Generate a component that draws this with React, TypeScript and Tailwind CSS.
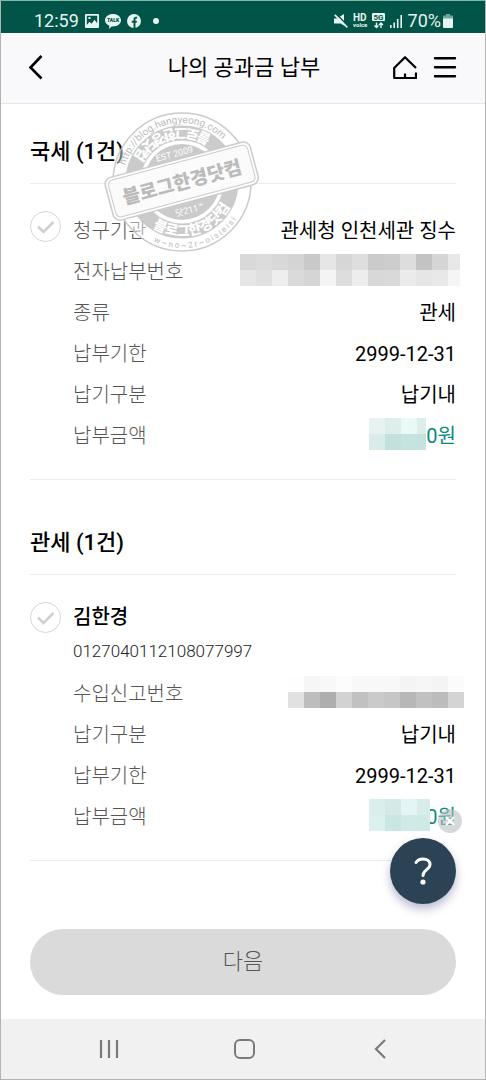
import type { ReactNode } from 'react';
import clsx from 'clsx';

type Cell = { w?: string; c: string };

type Row = {
  label: string;
  value: ReactNode;
};

const grayTop: Cell[] = [
  { c: 'bg-[#d9d9d9]' },
  { c: 'bg-[#dcdcdc]' },
  { c: 'bg-[#d8d8d8]' },
  { c: 'bg-[#d4d4d4]' },
  { c: 'bg-[#c9c9c9]' },
  { c: 'bg-[#e6e6e6]' },
  { c: 'bg-[#d6d6d6]' },
  { c: 'bg-[#dedede]' },
  { c: 'bg-[#cbcbcb]' },
  { c: 'bg-[#cdcdcd]' },
  { c: 'bg-[#dddddd]' },
  { c: 'bg-[#c3c3c3]' },
  { c: 'bg-[#d5d5d5]' },
  { c: 'bg-[#e8e8e8]', w: 'w-3' },
];

const grayBottom: Cell[] = [
  { c: 'bg-[#e6e6e6]' },
  { c: 'bg-[#e0e0e0]' },
  { c: 'bg-[#eeeeee]' },
  { c: 'bg-[#dadada]' },
  { c: 'bg-[#d5d5d5]' },
  { c: 'bg-[#f4f4f4]' },
  { c: 'bg-[#dddddd]' },
  { c: 'bg-[#ededed]' },
  { c: 'bg-[#d8d8d8]' },
  { c: 'bg-[#d9d9d9]' },
  { c: 'bg-[#ebebeb]' },
  { c: 'bg-[#e6e6e6]' },
  { c: 'bg-[#e8e8e8]' },
  { c: 'bg-[#f5f5f5]', w: 'w-3' },
];

const faintTop: Cell[] = [
  { c: 'bg-[#fefefe]' },
  { c: 'bg-[#f6f6f6]' },
  { c: 'bg-[#f8f8f8]' },
  { c: 'bg-[#fcfcfc]' },
  { c: 'bg-[#f8f8f8]' },
  { c: 'bg-[#f8f8f8]' },
  { c: 'bg-[#f8f8f8]' },
  { c: 'bg-[#f4f4f4]' },
  { c: 'bg-[#f6f6f6]' },
  { c: 'bg-[#f4f4f4]' },
  { c: 'bg-[#fbfbfb]' },
];

const darkBottom: Cell[] = [
  { c: 'bg-[#e1e1e1]' },
  { c: 'bg-[#bdbdbd]' },
  { c: 'bg-[#aeaeae]' },
  { c: 'bg-[#d2d2d2]' },
  { c: 'bg-[#c1c1c1]' },
  { c: 'bg-[#cacaca]' },
  { c: 'bg-[#c6c6c6]' },
  { c: 'bg-[#b7b7b7]' },
  { c: 'bg-[#c1c1c1]' },
  { c: 'bg-[#bcbcbc]' },
  { c: 'bg-[#d4d4d4]' },
];

const tealA: Cell[][] = [
  [{ c: 'bg-[#e8f3f1]' }, { c: 'bg-[#ddeeeb]' }, { c: 'bg-[#ebf8f8]' }, { c: 'bg-[#ddedea]', w: 'w-[9px]' }],
  [{ c: 'bg-[#daecea]' }, { c: 'bg-[#c2e0dd]' }, { c: 'bg-[#c7e3df]' }, { c: 'bg-[#c4e2de]', w: 'w-[9px]' }],
];

const tealB: Cell[][] = [
  [{ c: 'bg-[#daeeeb]' }, { c: 'bg-[#d3eae7]' }, { c: 'bg-[#e3f5f4]' }, { c: 'bg-[#d8ecea]', w: 'w-[13px]' }],
  [{ c: 'bg-[#dcf0ed]' }, { c: 'bg-[#c8e6e3]' }, { c: 'bg-[#d0eae8]' }, { c: 'bg-[#cfe9e6]', w: 'w-[13px]' }],
];

function Mosaic({ rows, className }: { rows: Cell[][]; className?: string }) {
  return (
    <span className={clsx('z-10 mt-[3px] flex flex-col self-start', className)} aria-hidden="true">
      {rows.map((cells, i) => (
        <span key={i} className="flex">
          {cells.map((cell, j) => (
            <span key={j} className={clsx('h-4', cell.w ?? 'w-4', cell.c)} />
          ))}
        </span>
      ))}
    </span>
  );
}

const nationalTax: Row[] = [
  { label: '청구기관', value: '관세청 인천세관 징수' },
  { label: '전자납부번호', value: <Mosaic rows={[grayTop, grayBottom]} className="-mr-1" /> },
  { label: '종류', value: '관세' },
  { label: '납부기한', value: '2999-12-31' },
  { label: '납기구분', value: '납기내' },
  {
    label: '납부금액',
    value: (
      <>
        <Mosaic rows={tealA} />
        <span className="text-[#0a8a7c]">0원</span>
      </>
    ),
  },
];

const customs: Row[] = [
  { label: '수입신고번호', value: <Mosaic rows={[faintTop, darkBottom]} className="-mr-2" /> },
  { label: '납기구분', value: '납기내' },
  { label: '납부기한', value: '2999-12-31' },
  {
    label: '납부금액',
    value: (
      <>
        <Mosaic rows={tealB} />
        <span className="-ml-1 text-[#0a8a7c]">0원</span>
      </>
    ),
  },
];

function StatusBar() {
  return (
    <div className="flex h-8 items-center justify-between bg-[#005548] pt-2 pr-8 pl-[33px] text-lg leading-6 text-[#e6f3f0]">
      <div className="flex items-center">
        <span>12:59</span>
        <svg className="ml-[6px] h-[14px] w-[14px]" viewBox="0 0 14 14">
          <path
            fill="currentColor"
            fillRule="evenodd"
            d="M1 0h12a1 1 0 0 1 1 1v12a1 1 0 0 1-1 1H1a1 1 0 0 1-1-1V1a1 1 0 0 1 1-1zM1.800 1.800v9.200l2.700-3.200 2 2 3-4 2.700 3.500V1.800zM3.500 3h2v2h-2z"
          />
        </svg>
        <svg className="ml-[6px] h-[15px] w-4" viewBox="0 0 16 15">
          <path fill="currentColor" d="M8 0c4.400 0 8 2.700 8 6.200s-3.600 6.200-8 6.200l-1-.1L3.800 15l.6-3.300C1.800 10.700 0 8.600 0 6.200 0 2.700 3.600 0 8 0z" />
          <text x="8" y="8" textAnchor="middle" fontSize="5" fontWeight="900" fill="#005548">
            TALK
          </text>
        </svg>
        <svg className="ml-[6px] h-[14px] w-[14px]" viewBox="0 0 14 14">
          <circle cx="7" cy="7" r="7" fill="currentColor" />
          <path fill="none" stroke="#005548" strokeWidth="1.900" d="M10.200 3.600H9c-1 0-1.500.6-1.500 1.600V14M4.800 7.800h5" />
        </svg>
        <span className="ml-3 h-[6px] w-[6px] rounded-full bg-current" />
      </div>

      <div className="flex items-center">
        <svg className="h-[14px] w-[14px]" viewBox="0 0 14 14">
          <path fill="currentColor" d="M0 4.500h3L10 0v11.500L6.500 9.500H0z" />
          <path stroke="#005548" strokeWidth="1.500" d="M2.200 0 14 11.800" />
          <path stroke="currentColor" strokeWidth="1.700" d="M.8.800l12.500 12.500" />
        </svg>
        <svg className="ml-[5px] h-4 w-[15px]" viewBox="0 0 15 16" fill="currentColor">
          <text x="0" y="8" fontSize="10" fontWeight="700">
            HD
          </text>
          <text x="0" y="14" fontSize="6" fontWeight="700">
            voice
          </text>
        </svg>
        <svg className="ml-1 h-4 w-[13px]" viewBox="0 0 13 16">
          <rect width="13" height="8" rx="1" fill="currentColor" />
          <text x="6.500" y="7" textAnchor="middle" fontSize="8" fontWeight="700" fill="#005548">
            5G
          </text>
          <path fill="none" stroke="currentColor" strokeWidth="1.400" d="M4.500 9.500v5M2.500 12.500l2 2 2-2M9 15v-5M7 12l2-2 2 2" />
        </svg>
        <svg className="ml-[5px] h-[13px] w-3" viewBox="0 0 12 13" fill="currentColor">
          <path d="M0 10h1.600v3H0zM3.400 7.500H5V13H3.400zM6.900 4h1.600v9H6.900zM10.400 0H12v13h-1.600z" />
        </svg>
        <span className="ml-[6px]">70%</span>
        <svg className="ml-[2px] h-[14px] w-[10px]" viewBox="0 0 10 14">
          <path fill="currentColor" opacity=".5" d="M3 0h4v1.500h2a1 1 0 0 1 1 1V5H0V2.500a1 1 0 0 1 1-1h2z" />
          <path fill="currentColor" d="M0 4.500h10V13a1 1 0 0 1-1 1H1a1 1 0 0 1-1-1z" />
        </svg>
      </div>
    </div>
  );
}

function Header() {
  return (
    <header className="grid h-[71px] grid-cols-[1fr_auto_1fr] items-center border-b border-[#e6e6ea] bg-[#f9f9fb] pr-7 pl-[30px]">
      <button type="button" aria-label="뒤로" className="justify-self-start">
        <svg className="h-6 w-5 overflow-visible" viewBox="0 0 20 24" fill="none" stroke="#000" strokeWidth="2.600">
          <path d="M10.500 0-.5 11.500l11 11" />
        </svg>
      </button>
      <h1 className="text-[22px] leading-8 text-black">나의 공과금 납부</h1>
      <div className="flex items-center gap-4 justify-self-end">
        <button type="button" aria-label="홈">
          <svg className="h-6 w-6" viewBox="0 0 24 24" fill="none" stroke="#000" strokeWidth="2.200">
            <path strokeLinejoin="round" d="M23 12 12 1.200 1.200 12V22H23V16.500M12 22V17.500" />
          </svg>
        </button>
        <button type="button" aria-label="메뉴">
          <svg className="h-6 w-6" viewBox="0 0 24 24" stroke="#000" strokeWidth="2.400" strokeLinecap="round">
            <path d="M2 2.200h20M2 11.200h20M2 20.200h20" />
          </svg>
        </button>
      </div>
    </header>
  );
}

function Stamp() {
  return (
    <svg className="pointer-events-none absolute top-[5px] left-[102px] h-[146px] w-[158px] opacity-90" viewBox="-79 -73 158 146" aria-hidden="true">
      <defs>
        <path id="stamp-url" d="M-59 0A59 59 0 0 1 59 0" />
        <path id="stamp-ring-bottom" d="M-54 0A54 54 0 0 0 54 0" />
        <path id="stamp-ring-top" d="M54 0A54 54 0 0 0-54 0" />
        <path id="stamp-edge" d="M-66 0A66 66 0 0 0 66 0" />
      </defs>
      <circle r="69" fill="#fff" fillOpacity=".5" stroke="#c6c6c6" strokeWidth="1.500" />
      <circle r="49" fill="none" stroke="#c6c6c6" strokeWidth="15" />
      <circle r="38" fill="#c6c6c6" />
      <g textAnchor="middle" transform="rotate(-15)">
        <text fontSize="10" fill="#b4b4b4">
          <textPath href="#stamp-url" startOffset="50%">
            http://blog.hangyeong.com
          </textPath>
        </text>
        <text fontSize="14" fontWeight="900" fill="#fff">
          <textPath href="#stamp-ring-bottom" startOffset="50%">
            블로그한경닷컴
          </textPath>
        </text>
        <text fontSize="14" fontWeight="900" fill="#fff">
          <textPath href="#stamp-ring-top" startOffset="50%">
            블로그한경닷컴
          </textPath>
        </text>
        <text fontSize="8" fill="#b4b4b4">
          <textPath href="#stamp-edge" startOffset="50%">
            w ~ n o ~ 2 r ~ o i s i e i s i
          </textPath>
        </text>
        <text y="-26" fontSize="9" fill="#fff">
          EST 2009
        </text>
        <text y="32" fontSize="9" fill="#fff">
          닷211™
        </text>
        <rect x="-75" y="-23" width="150" height="44" rx="7" fill="#fff" stroke="#c6c6c6" strokeWidth="1.500" />
        <rect x="-72" y="-20" width="144" height="38" rx="5" fill="#fbfbfb" stroke="#c6c6c6" strokeWidth="1" />
        <text y="7" fontSize="19" fontWeight="900" fill="#b4b4b4">
          블로그한경닷컴
        </text>
      </g>
    </svg>
  );
}

function RoundCheck({ label }: { label: string }) {
  return (
    <label className="relative mt-px block h-[31px] w-[31px] shrink-0">
      <input
        type="checkbox"
        aria-label={label}
        className="block h-[31px] w-[31px] appearance-none rounded-full border border-[#d6d6d6] bg-white checked:border-[#0a8a7c]"
      />
      <svg className="pointer-events-none absolute inset-0" viewBox="0 0 31 31" fill="none" stroke="#d0d0d0" strokeWidth="2.500">
        <path d="M8 15.500l5.500 5.500L23.500 11" />
      </svg>
    </label>
  );
}

function DetailRows({ rows }: { rows: Row[] }) {
  return (
    <dl>
      {rows.map((row) => (
        <div key={row.label} className="flex h-[41px] items-center justify-between text-xl leading-8">
          <dt className="font-light text-[#555]">{row.label}</dt>
          <dd className="flex h-full items-center text-black">{row.value}</dd>
        </div>
      ))}
    </dl>
  );
}

function BillSection({ title, className, children }: { title: string; className: string; children: ReactNode }) {
  return (
    <section className={className}>
      <h2 className="border-b border-[#ebebeb] pb-[15px] text-[22px] leading-8 font-medium text-black">{title}</h2>
      <div className="flex gap-3 border-b border-[#ebebeb] pt-[26px] pb-[23px]">{children}</div>
    </section>
  );
}

export default function App() {
  return (
    <div className="flex min-h-screen flex-col border border-t-[#7fb5ab] border-r-[#b3b3b3] border-b-[#b3b3b3] border-l-[#b3b3b3] bg-white font-['Roboto','Noto_Sans_CJK_KR',sans-serif]">
      <StatusBar />
      <Header />

      <main className="relative grow pr-[29px] pl-[29px]">
        <BillSection title="국세 (1건)" className="pt-8">
          <RoundCheck label="국세 선택" />
          <div className="grow">
            <DetailRows rows={nationalTax} />
          </div>
        </BillSection>

        <BillSection title="관세 (1건)" className="pt-[47px]">
          <RoundCheck label="관세 선택" />
          <div className="grow">
            <h3 className="text-xl leading-8 font-medium text-black">김한경</h3>
            <p className="mb-1 text-[17px] leading-9 font-light text-[#222]">0127040112108077997</p>
            <DetailRows rows={customs} />
          </div>
        </BillSection>

        <Stamp />

        <div className="relative pt-[68px] pb-6">
          <button
            type="button"
            aria-label="도움말 닫기"
            className="absolute -top-[52px] -right-[6px] z-20 flex h-6 w-6 items-center justify-center rounded-full bg-[#b9c0c2]/60"
          >
            <svg className="h-3 w-3" viewBox="0 0 12 12" stroke="#fff" strokeWidth="2">
              <path d="M2 2l8 8M10 2l-8 8" />
            </svg>
          </button>
          <button
            type="button"
            aria-label="도움말"
            className="absolute -top-[23px] right-0 flex h-[66px] w-[66px] items-center justify-center rounded-full bg-[#2b4354] shadow-[0_5px_10px_rgba(60,60,130,0.35)]"
          >
            <svg className="h-7 w-5" viewBox="0 0 20 28" fill="none" stroke="#fff" strokeWidth="3" strokeLinecap="round">
              <path d="M3 5.500C4.500 3 7 2 10 2c4 0 7 2.200 7 5.500 0 5.200-7 5.200-7 11" />
              <circle cx="10" cy="25" r="2.600" fill="#fff" stroke="none" />
            </svg>
          </button>
          <button
            type="button"
            disabled
            className="h-[66px] w-full rounded-full bg-[#dadada] text-[22px] leading-8 font-light text-[#555]"
          >
            다음
          </button>
        </div>
      </main>

      <nav className="flex h-[60px] items-center justify-between bg-[#f1f1f1] px-[93px] text-[#7a7a7a]">
        <button type="button" aria-label="최근 앱">
          <svg className="h-6 w-7" viewBox="0 0 28 24" stroke="currentColor" strokeWidth="2.200">
            <path d="M7 3v18M15 3v18M23 3v18" />
          </svg>
        </button>
        <button type="button" aria-label="홈 화면">
          <svg className="h-6 w-6" viewBox="0 0 24 24" fill="none" stroke="currentColor" strokeWidth="2">
            <rect x="2" y="3" width="19" height="18" rx="5" />
          </svg>
        </button>
        <button type="button" aria-label="이전">
          <svg className="h-6 w-6" viewBox="0 0 24 24" fill="none" stroke="currentColor" strokeWidth="2.200">
            <path d="M17 3 8 12l9 9" />
          </svg>
        </button>
      </nav>
    </div>
  );
}
